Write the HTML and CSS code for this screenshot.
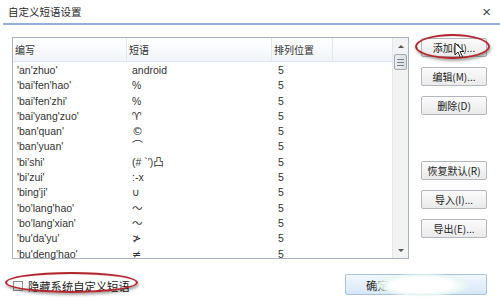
FILE: index.html
```html
<!DOCTYPE html>
<html lang="zh-CN">
<head>
  <meta charset="UTF-8" />
  <title>自定义短语设置</title>
  <link rel="stylesheet" href="styles.css">
</head>
<body>
  <div class="dialog">
    <header class="titlebar">
      <span class="title">自定义短语设置</span>
      <span class="close">×</span>
    </header>

    <section class="main">
      <div class="list">
        <div class="table">
          <div class="head">
            <span class="c1">编写</span>
            <span class="c2">短语</span>
            <span class="c3">排列位置</span>
            <span class="c4"></span>
          </div>
          <div class="rows">
            <div class="row"><span class="c1">'an'zhuo'</span><span class="c2">android</span><span class="c3">5</span></div>
            <div class="row"><span class="c1">'bai'fen'hao'</span><span class="c2">%</span><span class="c3">5</span></div>
            <div class="row"><span class="c1">'bai'fen'zhi'</span><span class="c2">%</span><span class="c3">5</span></div>
            <div class="row"><span class="c1">'bai'yang'zuo'</span><span class="c2 sym">♈</span><span class="c3">5</span></div>
            <div class="row"><span class="c1">'ban'quan'</span><span class="c2 sym">©</span><span class="c3">5</span></div>
            <div class="row"><span class="c1">'ban'yuan'</span><span class="c2 sym">⌒</span><span class="c3">5</span></div>
            <div class="row"><span class="c1">'bi'shi'</span><span class="c2">(# `′)凸</span><span class="c3">5</span></div>
            <div class="row"><span class="c1">'bi'zui'</span><span class="c2">:-x</span><span class="c3">5</span></div>
            <div class="row"><span class="c1">'bing'ji'</span><span class="c2 sym">∪</span><span class="c3">5</span></div>
            <div class="row"><span class="c1">'bo'lang'hao'</span><span class="c2">～</span><span class="c3">5</span></div>
            <div class="row"><span class="c1">'bo'lang'xian'</span><span class="c2">～</span><span class="c3">5</span></div>
            <div class="row"><span class="c1">'bu'da'yu'</span><span class="c2 sym">≯</span><span class="c3">5</span></div>
            <div class="row"><span class="c1">'bu'deng'hao'</span><span class="c2 sym">≠</span><span class="c3">5</span></div>
          </div>
        </div>
        <div class="scrollbar">
          <span class="arrow up"></span>
          <span class="thumb"><i></i><i></i><i></i></span>
          <span class="track"></span>
          <span class="arrow down"></span>
        </div>
      </div>

      <div class="actions">
        <button>添加(N)...</button>
        <button>编辑(M)...</button>
        <button>删除(D)</button>
        <span class="spacer"></span>
        <button>恢复默认(R)</button>
        <button>导入(I)...</button>
        <button>导出(E)...</button>
      </div>
    </section>

    <footer class="bottom">
      <label class="hide-sys"><span class="box"></span>隐藏系统自定义短语</label>
      <button class="ok">确定</button>
    </footer>

    <!-- annotations drawn over the dialog -->
    <span class="ring ring-add"></span>
    <span class="ring ring-check"></span>
    <svg class="cursor" width="11" height="17" viewBox="0 0 11 17">
      <path d="M1 1 L1 13 L4 10 L6.5 15.5 L8.5 14.5 L6 9.5 L10 9.5 Z" fill="#fff" stroke="#222" stroke-width="1"/>
    </svg>
    <span class="glare"></span>
  </div>
</body>
</html>
```

FILE: styles.css
```css
body {
  margin: 0;
  background: #fff;
  font-family: "Liberation Sans", "Noto Sans CJK SC", sans-serif;
  color: #2b2b2b;
}

.dialog {
  position: relative;
  width: 500px;
  height: 300px;
  overflow: hidden;
  background: #fff;
}

.titlebar {
  display: flex;
  justify-content: space-between;
  align-items: center;
  height: 23px;
  margin-left: 3px;
  padding: 0 9px 0 5px;
  border-bottom: 2px solid #8fb1dc;
}

.title {
  font-family: "Noto Sans CJK SC", sans-serif;
  font-size: 10.5px;
  color: #2a2a2a;
}

.close {
  font-size: 15px;
  color: #444;
  line-height: 1;
}

.main {
  display: flex;
  gap: 12px;
  padding: 12px 0 0 12px;
}

.list {
  display: flex;
  width: 395px;
  height: 220px;
  border: 1px solid #a9b3bf;
}

.table {
  flex: 1;
}

.head {
  display: flex;
  height: 23px;
  align-items: center;
  background: linear-gradient(#ffffff, #f1f4f8);
  border-bottom: 1px solid #dfe6ee;
  font-family: "Noto Sans CJK SC", sans-serif;
  font-size: 10px;
  color: #333;
}

.head span {
  height: 23px;
  line-height: 23px;
  padding-left: 2px;
  border-right: 1px solid #e2e7ee;
  box-sizing: border-box;
}

.head .c4 {
  flex: 1;
  border-right: none;
}

.c1 { width: 114px; }
.c2 { width: 145px; }
.c3 { width: 61px; }

.rows {
  padding-top: 1px;
}

.row {
  display: flex;
  height: 15.3px;
  line-height: 15.3px;
  font-size: 10.5px;
  color: #333;
}

.row span {
  padding-left: 4px;
  box-sizing: border-box;
  white-space: nowrap;
}

.row .c2 {
  padding-left: 5px;
}

.row .sym {
  font-family: "DejaVu Sans", sans-serif;
  font-size: 11px;
}

.row .c3 {
  padding-left: 6px;
}

.scrollbar {
  display: flex;
  flex-direction: column;
  width: 15px;
  background: #f2f2f2;
  border-left: 1px solid #e6e6e6;
}

.arrow {
  height: 16px;
  display: flex;
  justify-content: center;
  align-items: center;
}

.arrow::after {
  content: "";
  border-left: 3px solid transparent;
  border-right: 3px solid transparent;
}

.arrow.up::after {
  border-bottom: 3px solid #555;
}

.arrow.down::after {
  border-top: 3px solid #555;
}

.thumb {
  height: 14px;
  margin: 0 1px;
  display: flex;
  flex-direction: column;
  justify-content: center;
  gap: 2px;
  align-items: center;
  background: linear-gradient(90deg, #eceef0, #dcdfe3);
  border: 1px solid #a3a8ae;
  border-radius: 2px;
}

.thumb i {
  display: block;
  width: 7px;
  height: 1px;
  background: #7c8288;
}

.track {
  flex: 1;
}

.actions {
  display: flex;
  flex-direction: column;
  gap: 10px;
  padding-top: 1px;
}

.actions button {
  width: 66px;
  height: 19px;
  padding: 0;
  border: 1px solid #b4b8be;
  border-radius: 2px;
  background: linear-gradient(#fbfbfb, #eaeaea);
  font-family: "Noto Sans CJK SC", sans-serif;
  font-size: 10px;
  color: #222;
}

.spacer {
  height: 26px;
}

.bottom {
  display: flex;
  justify-content: space-between;
  align-items: center;
  padding: 15px 13px 0 13px;
}

.hide-sys {
  display: flex;
  align-items: center;
  gap: 5px;
  font-family: "Noto Sans CJK SC", sans-serif;
  font-size: 11.3px;
  color: #222;
  margin-top: 3px;
}

.box {
  width: 8px;
  height: 8px;
  border: 1px solid #8e8f8f;
  background: linear-gradient(135deg, #f0f0f0, #fff);
}

.ok {
  width: 142px;
  height: 21px;
  padding: 0 0 0 20px;
  text-align: left;
  border: 1px solid #a9c3df;
  border-radius: 2px;
  background: linear-gradient(#f1f7fe, #d7e7f8);
  font-family: "Noto Sans CJK SC", sans-serif;
  font-size: 11.5px;
  color: #222;
}

.ring {
  position: absolute;
  border: 2px solid #b3262b;
  border-radius: 50%;
  box-shadow: 1px 2px 3px rgba(0, 0, 0, 0.35), inset 0 0 1px rgba(120, 0, 0, 0.4);
}

.ring-add {
  left: 415px;
  top: 34px;
  width: 71px;
  height: 21px;
}

.ring-check {
  left: 5px;
  top: 272px;
  width: 129px;
  height: 17px;
}

.cursor {
  position: absolute;
  left: 454px;
  top: 42px;
}

.glare {
  position: absolute;
  left: 372px;
  top: 273px;
  width: 100px;
  height: 24px;
  background: radial-gradient(ellipse closest-side at 50% 50%, #fff 60%, rgba(232, 248, 242, 0.85) 85%, rgba(255, 255, 255, 0) 100%);
}
```
